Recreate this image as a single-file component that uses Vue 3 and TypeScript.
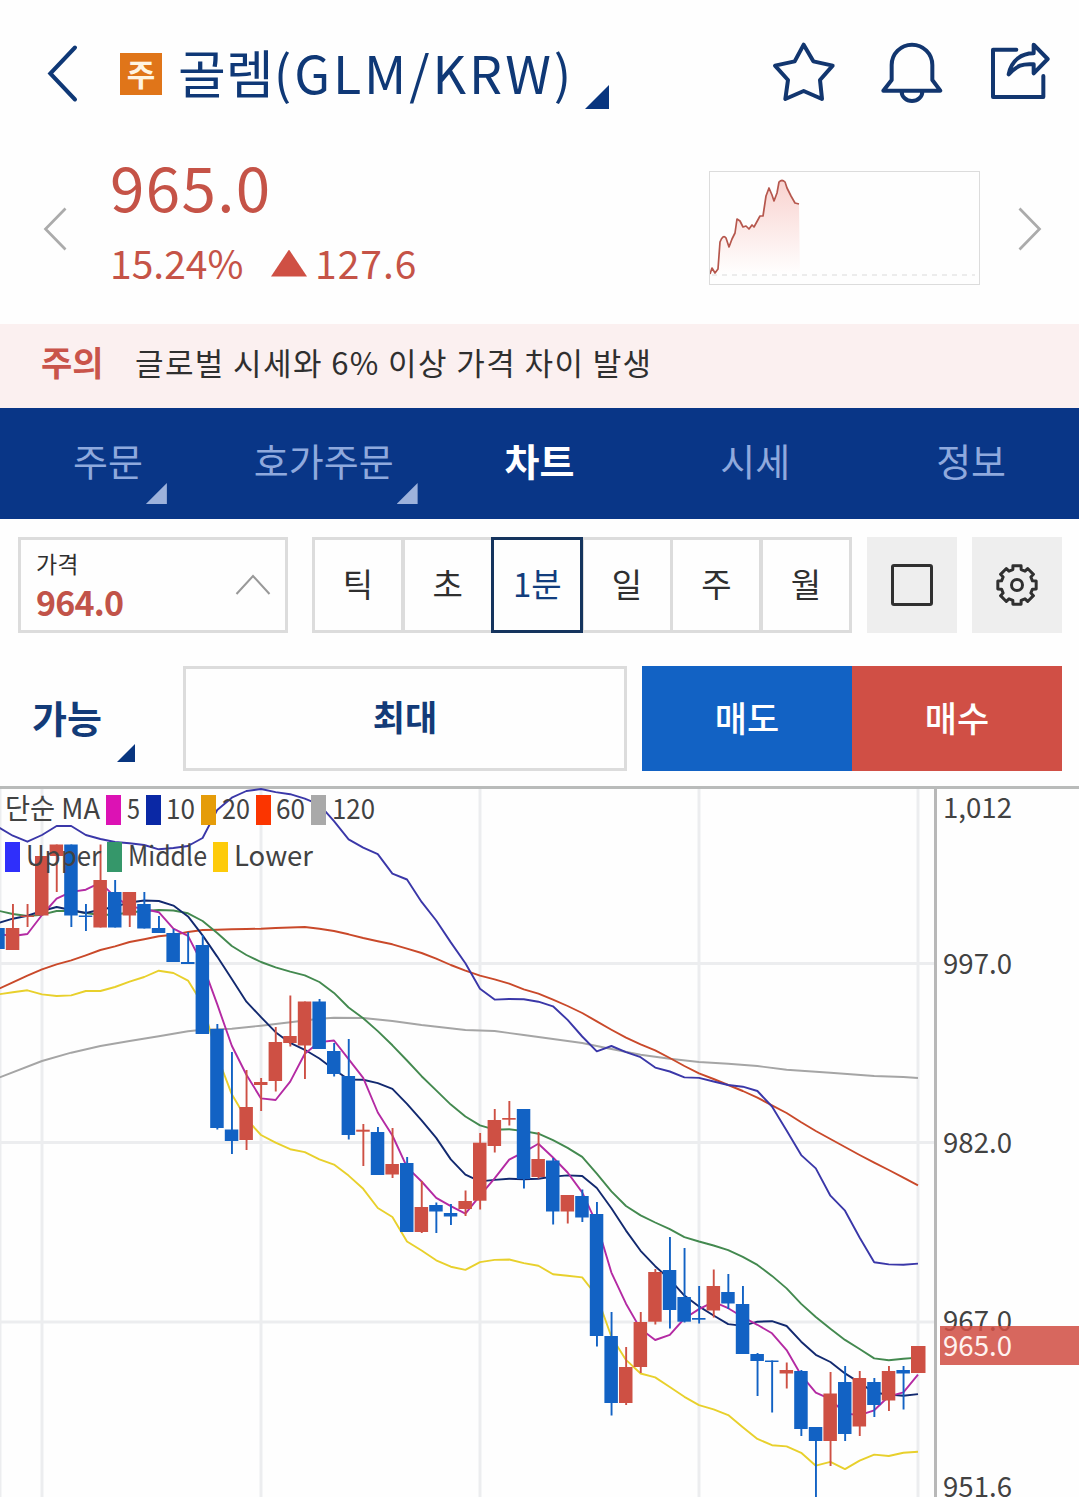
<script setup lang="ts">
interface Candle { x: number; top: number; bottom: number; high: number; low: number; up: boolean }

const STEP = 14.6
const ORIGIN = -1.8
const xAt = (i: number): number => ORIGIN + i * STEP

// [body top, body bottom, wick high, wick low, rising]
const raw: [number, number, number, number, number][] = [
  [928, 949, 928, 949, 0], [928, 950, 904, 950, 1], [915.5, 917, 904, 927, 1], [856, 915.5, 856, 915.5, 1],
  [844.5, 856, 844.5, 892, 1], [844.5, 915.5, 844.5, 927, 0], [915.5, 917, 904, 931, 0], [880, 927.5, 844.5, 927.5, 1],
  [892, 927.5, 880, 927.5, 0], [892, 915.5, 892, 927, 1], [904, 928.5, 892, 928.5, 0], [928, 933, 916, 933, 0],
  [933, 962, 929, 962, 0], [962, 964, 932, 964, 0], [945, 1034, 935, 1034, 0], [1029, 1128, 1024, 1129.5, 0],
  [1129.5, 1141, 1052, 1154, 0], [1107, 1140, 1070, 1150, 1], [1082, 1085, 1078, 1111, 1], [1042, 1081, 1027, 1091.5, 1],
  [1036, 1043, 995.5, 1046.5, 1], [1001.5, 1045.5, 1001.5, 1079, 1], [1001.5, 1049, 999, 1049, 0], [1051, 1074, 1043, 1076.5, 0],
  [1076, 1135, 1039, 1139.5, 0], [1129.7, 1131.7, 1124, 1166, 1], [1132, 1175, 1127, 1175, 0], [1164, 1174.5, 1128, 1178, 1],
  [1163, 1232, 1157, 1232, 0], [1207, 1232, 1181, 1233, 1], [1205, 1211.5, 1202.5, 1233, 0], [1213, 1216.5, 1204, 1225, 0],
  [1201, 1209, 1190.5, 1216, 1], [1142.7, 1200.7, 1133, 1209.5, 1], [1120, 1146, 1109, 1152.5, 1], [1118, 1119.7, 1101, 1125.5, 1],
  [1109, 1179, 1109, 1188.5, 0], [1159, 1177, 1132, 1178.5, 1], [1160.5, 1211.5, 1158, 1224.5, 0], [1195, 1211.5, 1195, 1223.5, 1],
  [1196, 1217.5, 1189.5, 1222, 0], [1214, 1336, 1202, 1346.5, 0], [1336, 1403, 1312, 1415.5, 0], [1367, 1403, 1347, 1405, 1],
  [1322, 1367, 1312, 1373, 1], [1272, 1321.7, 1269, 1324.5, 1], [1270, 1310, 1237, 1328.5, 0], [1297, 1321.7, 1248, 1322.5, 0],
  [1318, 1319.7, 1286, 1323.5, 0], [1286, 1310.5, 1269.5, 1317.5, 1], [1292, 1303.5, 1274, 1309, 0], [1304, 1354, 1286, 1354, 0],
  [1354, 1361, 1353, 1396, 0], [1360.5, 1362, 1360.5, 1412.5, 0], [1370, 1373.5, 1362.5, 1388.5, 1], [1371, 1429, 1370, 1436, 0],
  [1427, 1441, 1427, 1500, 0], [1393.5, 1441, 1372, 1466, 1], [1382, 1434, 1366, 1441, 0], [1378, 1426.5, 1371, 1436, 1],
  [1382, 1405, 1378, 1417, 0], [1371, 1400.5, 1366, 1411, 1], [1370, 1373.5, 1366, 1409.5, 0], [1346, 1373, 1346, 1373, 1],
]

const candles: Candle[] = raw.map(([top, bottom, high, low, up], i) => ({ x: xAt(i), top, bottom, high, low, up: up === 1 }))
const closes: number[] = candles.map((c) => (c.up ? c.top : c.bottom))

// Moving average of closes; seed covers the bars whose window starts off-screen.
function average(period: number, seed: number[]): number[] {
  return closes.map((_, i) => {
    if (i < seed.length) return seed[i]
    return closes.slice(i - period + 1, i + 1).reduce((a, b) => a + b, 0) / period
  })
}

const ma5 = average(5, [934, 936, 934, 915])
const ma10 = average(10, [923, 918.7, 915.7, 911, 907, 910, 913, 909.7, 906.7])
const middle = average(20, [910.7, 914, 916, 914.7, 911, 910.7, 913, 915, 914.5, 912.5, 911, 910, 910.5, 913.3, 921, 933, 946, 955, 962])
const upperSeed = [827, 835.7, 841.7, 835, 826, 826, 835, 839, 842, 843.3, 845, 849.3, 848, 846, 838, 810, 797.7, 791, 789]
const upper = middle.map((m, i) => {
  if (i < upperSeed.length) return upperSeed[i]
  const variance = closes.slice(i - 19, i + 1).reduce((a, b) => a + (b - m) ** 2, 0) / 20
  return m - 2 * Math.sqrt(variance)
})
const lower = middle.map((m, i) => 2 * m - upper[i])

const ma60 = [989, 982.3, 975.7, 969.3, 964.3, 960.3, 955.3, 950, 946.3, 942, 939.3, 936.3, 934.7, 932, 930, 929.7, 929.3, 929, 928.7,
  928, 927.5, 927, 928.7, 931, 934.3, 938, 941.3, 944.3, 948.7, 953, 958.7, 965, 970.7, 975.7, 979.3, 983.7, 989.3, 993.7, 999.7,
  1006, 1013, 1021.3, 1029.7, 1037.7, 1044.3, 1050.3, 1058, 1066, 1073.3, 1079, 1085, 1091, 1097.7, 1105.3, 1113, 1122.3, 1131,
  1139, 1147, 1155, 1162.7, 1170, 1177.7, 1185.3]
const ma120: [number, number][] = [[0, 1078], [3, 1061], [5, 1052.7], [7, 1046], [9, 1041], [11, 1036.3], [13, 1031.3], [14, 1029.7],
  [16, 1028.7], [18, 1025.7], [20, 1022.3], [22, 1018.7], [23, 1017.7], [25, 1018], [27, 1021], [29, 1025], [32, 1030], [34, 1031],
  [36, 1035], [38, 1039], [40, 1043], [42, 1049], [44, 1054.7], [46, 1058.7], [48, 1062], [50, 1063.7], [52, 1066], [54, 1069.7],
  [57, 1072.7], [60, 1076], [62, 1077], [63, 1078]]

const line = (ys: number[]): string => ys.map((y, i) => `${xAt(i).toFixed(1)},${y.toFixed(1)}`).join(' ')

const curves = [
  { color: '#a5a5a5', points: ma120.map(([i, y]) => `${xAt(i)},${y}`).join(' ') },
  { color: '#c9492a', points: line(ma60) },
  { color: '#e8d02c', points: line(lower) },
  { color: '#43894f', points: line(middle) },
  { color: '#3a37a8', points: line(upper) },
  { color: '#12296f', points: line(ma10) },
  { color: '#b42aa3', points: line(ma5) },
]

const legend = [
  { text: '단순 MA', x: 5, w: 95, y: 819 },
  { text: '5', x: 127, w: 13, y: 819, box: 106, color: '#dc12b4' },
  { text: '10', x: 166, w: 29, y: 819, box: 146, color: '#0a28a5' },
  { text: '20', x: 222, w: 28, y: 819, box: 201, color: '#e59c09' },
  { text: '60', x: 276, w: 29, y: 819, box: 256, color: '#fb3500' },
  { text: '120', x: 332, w: 43, y: 819, box: 311, color: '#a9a9a9' },
  { text: 'Upper', x: 26, w: 75, y: 866, box: 5, color: '#2f2ffb' },
  { text: 'Middle', x: 128, w: 79, y: 866, box: 107, color: '#35976a' },
  { text: 'Lower', x: 234, w: 79, y: 866, box: 213, color: '#fdcb0a' },
]

const axis = [
  { text: '1,012', y: 818, w: 69 },
  { text: '997.0', y: 973.5, w: 69 },
  { text: '982.0', y: 1152.5, w: 69 },
  { text: '967.0', y: 1331, w: 69 },
  { text: '951.6', y: 1496.5, w: 69 },
]

const tabs = [
  { label: '주문', more: true }, { label: '호가주문', more: true }, { label: '차트', active: true }, { label: '시세' }, { label: '정보' },
]
const periods = ['틱', '초', '1분', '일', '주', '월']

const gear = Array.from({ length: 8 }, (_, k) => {
  const p = (r: number, d: number) => {
    const a = ((k * 45 + d - 90) * Math.PI) / 180
    return `${(21 + r * Math.cos(a)).toFixed(2)},${(21 + r * Math.sin(a)).toFixed(2)}`
  }
  return [p(16, -15), p(19.6, -12), p(19.6, 12), p(16, 15)].join(' ')
}).join(' ')
</script>

<template>
  <main class="app">
    <header class="head">
      <svg class="back" width="34" height="60" viewBox="0 0 34 60"><path d="M29 3.5 4.300 29.500 29 55.500" /></svg>
      <span class="badge">주</span>
      <h1 class="title"><span>골렘</span><span class="pair">(GLM/KRW)</span></h1>
      <i class="corner title-corner"></i>
      <div class="actions">
        <svg width="66" height="64" viewBox="453 120 198 192"><path d="M551 134 580 184 638 197 600 240 606 297 551 273 496 297 504 240 465 197 524 184Z" /></svg>
        <svg width="66" height="64" viewBox="777 120 198 192"><path d="M815 240V195a61 61 0 0 1 122 0V240L961 272H790ZM845 275a31 28 0 0 0 62 0" /></svg>
        <svg width="66" height="64" viewBox="1101 120 198 192"><path d="M1189 149H1119V291H1270V228M1166 223C1174 180 1205 160 1241 160V134L1283 177 1241 220V193C1208 190 1190 197 1166 223Z" /></svg>
      </div>
    </header>

    <section class="quote">
      <svg class="step" width="24" height="44" viewBox="0 0 24 44"><path d="M22.500 1.5 2.500 22 22.500 42.500" /></svg>
      <div class="figures">
        <div class="price">965.0</div>
        <div class="change"><span class="rate">15.24%</span><i class="rise"></i><span class="diff">127.6</span></div>
      </div>
      <svg class="mini" width="271" height="114" viewBox="709 171 271 114">
        <defs><linearGradient id="fade" x1="0" y1="0" x2="0" y2="1"><stop offset="0" stop-color="#f9d3d0" /><stop offset="1" stop-color="#fff" /></linearGradient></defs>
        <path fill="url(#fade)" d="M710 274 712 268 715 273 718 269 720 242 724 236 727 241 729 247 732 239 735 233 737 220 740 221 743 227 746 226 749 229 752 225 754 227 760 216 763 216 766 196 769 188 772 195 774 201 777 193 779 182 783 181 787 188 791 196 795 203 799 204 800 275Z" />
        <path class="base" d="M712 275H975" />
        <path class="trend" d="M710 274 712 268 715 273 718 269 720 242Q723 234 726 238L729 247 732 239 735 233 737 219 740 221 743 227 746 226 749 229 752 225 754 227 760 216 763 216 766 196 769 188 772 195 774 201 777 193 779 182Q782 179 785 182L787 188 791 196 795 203 799 204" />
        <rect x="709.5" y="171.500" width="270" height="113" fill="none" stroke="#dcdcdc" />
      </svg>
      <svg class="step next" width="24" height="44" viewBox="0 0 24 44"><path d="M1.500 1.5 21.500 22 1.500 42.500" /></svg>
    </section>

    <section class="notice"><b>주의</b><span>글로벌 시세와 6% 이상 가격 차이 발생</span></section>

    <nav class="tabs">
      <div v-for="t in tabs" :key="t.label" class="tab" :class="{ active: t.active }">
        <span class="tab-label">{{ t.label }}<i v-if="t.more" class="corner tab-corner"></i></span>
      </div>
    </nav>

    <section class="tools">
      <div class="select">
        <div><div class="select-name">가격</div><div class="select-value">964.0</div></div>
        <svg width="36" height="22" viewBox="0 0 36 22"><path d="M1.5 20 18 2 34.500 20" /></svg>
      </div>
      <div class="periods">
        <div v-for="p in periods" :key="p" class="period" :class="{ active: p === '1분' }">{{ p }}</div>
      </div>
      <div class="tool"><i class="square"></i></div>
      <div class="tool last">
        <svg width="42" height="42" viewBox="0 0 42 42"><polygon :points="gear" /><circle cx="21" cy="21" r="5.500" /></svg>
      </div>
    </section>

    <section class="order">
      <div class="avail">가능<i class="corner avail-corner"></i></div>
      <div class="max">최대</div>
      <div class="side sell">매도</div>
      <div class="side buy">매수</div>
    </section>

    <svg class="chart" width="1079" height="711" viewBox="0 786 1079 711">
      <g stroke="#ecedef" stroke-width="3">
        <path v-for="x in [0, 42, 261, 480, 699, 918]" :key="'v' + x" :d="`M${x} 789V1497`" />
        <path v-for="y in [963.5, 1142.5, 1322]" :key="'h' + y" :d="`M0 ${y}H934`" />
      </g>
      <path d="M0 787.500H1079" stroke="#b9bbba" stroke-width="3" />
      <path d="M935.500 789V1497" stroke="#b8b8b8" stroke-width="3" />
      <polyline v-for="c in curves" :key="c.color" :points="c.points" fill="none" :stroke="c.color" stroke-width="1.900" stroke-linejoin="round" />
      <g v-for="(c, i) in candles" :key="i" :fill="c.up ? '#ce5044' : '#1262c4'">
        <rect :x="c.x - 0.8" :y="c.high" width="1.9" :height="c.low - c.high" />
        <rect :x="c.x - 7" :y="c.top" :width="i === 63 ? 14.5 : 13.5" :height="c.bottom - c.top" />
      </g>
      <g class="chart-text">
        <template v-for="l in legend" :key="l.text">
          <rect v-if="l.box !== undefined" :x="l.box" :y="l.y > 850 ? 842 : 795" width="15" height="30" :fill="l.color" />
          <text :x="l.x" :y="l.y" :textLength="l.w" lengthAdjust="spacingAndGlyphs">{{ l.text }}</text>
        </template>
        <text v-for="a in axis" :key="a.text" x="943" :y="a.y" :textLength="a.w" lengthAdjust="spacingAndGlyphs">{{ a.text }}</text>
      </g>
      <rect x="940" y="1326" width="139" height="39" fill="#d04e44" fill-opacity=".86" />
      <text class="chart-text now" x="943" y="1356" textLength="69" lengthAdjust="spacingAndGlyphs">965.0</text>
    </svg>
  </main>
</template>

<style>
body { margin: 0; background: #fefefe; }
</style>

<style scoped>
.app { width: 1079px; height: 1497px; overflow: hidden; background: #fefefe; color: #2f2f2f; font-family: "Noto Sans CJK KR", "Noto Sans", sans-serif; line-height: 1; white-space: nowrap; box-sizing: border-box; }
.app * { box-sizing: border-box; }
svg { display: block; flex: none; }
.corner { display: block; flex: none; background: #08357f; clip-path: polygon(100% 0, 100% 100%, 0 100%); }

.head { height: 147px; display: flex; align-items: center; padding-left: 46px; }
.back { fill: none; stroke: #0f3876; stroke-width: 4; stroke-linecap: round; }
.badge { width: 42px; height: 42px; margin-left: 40px; background: #e07519; color: #fff4e2; font-size: 31px; line-height: 40px; font-weight: 700; text-align: center; }
.title { width: 391px; margin: 0 0 4px 16px; font-size: 52px; line-height: 60px; font-weight: 400; color: #0f3876; display: flex; }
.pair { letter-spacing: 2.9px; }
.title-corner { width: 24px; height: 24px; margin: 47px 0 0 16px; }
.actions { display: flex; gap: 42px; margin: 0 0 4px 162px; }
.actions svg { fill: none; stroke: #12366f; stroke-width: 12; stroke-linejoin: round; stroke-linecap: round; }

.quote { height: 177px; display: flex; padding-left: 43px; }
.step { margin-top: 60px; fill: none; stroke: #ababab; stroke-width: 2.7; }
.next { margin-left: 38px; }
.figures { width: 642px; padding-left: 43px; color: #c55347; }
.price { font-size: 62px; line-height: 64px; margin-top: 6px; letter-spacing: 1.3px; }
.change { display: flex; align-items: center; height: 48px; margin-top: 21px; font-size: 39px; }
.rate { width: 161px; letter-spacing: 0; }
.rise { width: 36px; height: 27px; margin-top: 2px; background: #cf5044; clip-path: polygon(50% 0, 100% 100%, 0 100%); }
.diff { margin-left: 8px; letter-spacing: 1px; }
.mini { margin-top: 24px; }
.base { fill: none; stroke: #e6e6e6; stroke-width: 1.5; stroke-dasharray: 5 5; }
.trend { fill: none; stroke: #b6574d; stroke-width: 1.7; stroke-linejoin: round; }

.notice { height: 84px; display: flex; align-items: center; padding: 0 0 9px 41px; background: #fbf0f0; font-size: 31px; }
.notice b { width: 94px; font-size: 34px; color: #c9544a; }
.notice span { letter-spacing: 1.4px; }

.tabs { height: 111px; display: flex; background: #093687; color: #8fa9dd; font-size: 38px; }
.tab { flex: 1; display: flex; justify-content: center; padding-top: 33px; }
.tab.active { color: #fff; font-weight: 700; }
.tab-label { position: relative; height: 38px; }
.tab-corner { position: absolute; right: -24px; bottom: -25px; width: 21px; height: 21px; background: #9db2dc; }

.tools { display: flex; margin: 18px 17px 0 18px; height: 96px; }
.select { width: 270px; border: 3px solid #dcdcdc; display: flex; justify-content: space-between; padding: 12px 14px 0 15px; }
.select svg { margin-top: 22px; fill: none; stroke: #999; stroke-width: 2; }
.select-name { font-size: 23px; }
.select-value { margin-top: 10px; font-size: 34px; font-weight: 700; color: #c15349; letter-spacing: -.8px; }
.periods { width: 540px; margin-left: 24px; display: flex; }
.period { flex: 1; height: 96px; border: 3px solid #dcdcdc; margin-right: -2.4px; display: flex; align-items: center; justify-content: center; padding-bottom: 4px; font-size: 33px; }
.period:last-child { margin-right: 0; }
.period.active { position: relative; border-color: #15345e; color: #123d7d; }
.tool { width: 90px; margin-left: 15px; background: #eee; display: flex; align-items: center; justify-content: center; }
.square { width: 42px; height: 42px; border: 3px solid #303030; border-radius: 3px; }
.tool svg { fill: none; stroke: #303030; stroke-width: 3; stroke-linejoin: round; }

.order { display: flex; height: 105px; margin: 33px 17px 15px 0; font-size: 35px; }
.avail { position: relative; width: 183px; padding: 32px 0 0 32px; font-size: 38px; font-weight: 700; color: #133b78; }
.avail-corner { position: absolute; left: 117px; top: 78px; width: 18px; height: 18px; }
.max { width: 444px; margin-right: 15px; border: 3px solid #dcdcdc; display: flex; align-items: center; justify-content: center; padding-bottom: 7px; font-weight: 700; color: #133b78; }
.side { width: 210px; display: flex; align-items: center; justify-content: center; padding-bottom: 5px; color: #fff; font-weight: 500; }
.sell { background: #1262c4; }
.buy { background: #d04f45; }

.chart-text { font-size: 28px; fill: #424242; }
.now { fill: #fff3f0; }
</style>
